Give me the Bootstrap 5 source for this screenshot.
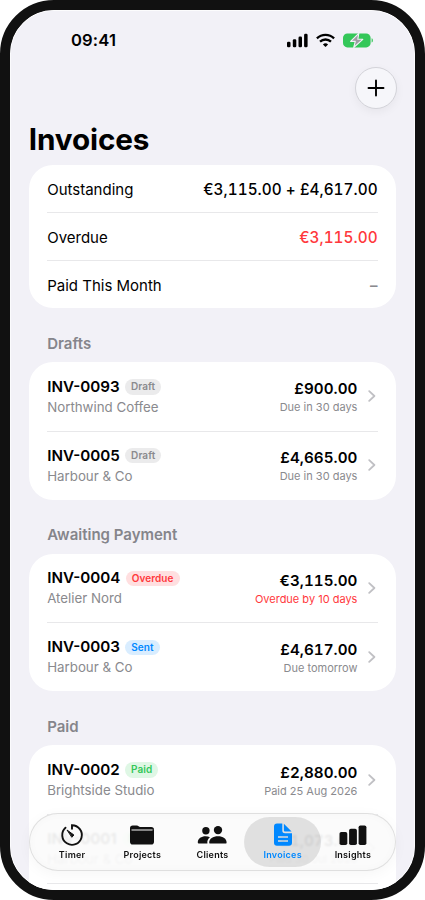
<!DOCTYPE html>
<html lang="en">
<head>
<meta charset="utf-8">
<meta name="viewport" content="width=device-width, initial-scale=1">
<title>Invoices</title>
<link rel="stylesheet" href="https://cdn.jsdelivr.net/npm/bootstrap@5.3.0/dist/css/bootstrap.min.css">
<style>
html,body{height:100%;overflow:hidden}
body{font-family:Inter,"Liberation Sans",sans-serif;font-size:15px;color:#000;background:#fff}
svg{display:block}
.phone{width:425px;height:900px;border:10px solid #111;border-radius:54px;background:#f2f1f7}
.phone-screen{height:880px;padding:.3px 19px 0;border-radius:44px;box-shadow:inset 0 0 0 .7px #fff}
.status-bar{height:56.7px;padding:3.3px 23px 0 42px}
.clock{font-size:16.6px;font-weight:600;letter-spacing:.15px}
.add-btn{width:42px;height:42px;border:1px solid #d3d3d9;background:#f6f6fa;box-shadow:0 3px 10px rgba(0,0,0,.05);margin-right:-.5px}
.page-title{font-size:29.7px;font-weight:700;line-height:36px;letter-spacing:-.15px;margin:12.3px 0 7.5px -.2px}
.panel{background:#fff;border-radius:24px;padding:0 18.4px 0 18.2px}
.panel>div+div{border-top:1px solid #e8e8ea}
.sum-row{height:47.7px;padding-top:3px}
.num{font-weight:500;font-size:15.3px;font-feature-settings:"tnum";letter-spacing:.05px}
.none{font-weight:600;color:#8a8a8e}
.red{color:#ff383c}
.section-head{font-size:15px;font-weight:600;line-height:20px;color:#85858b;padding-left:18.2px;margin:25.9px 0 8.2px}
.inv-row{height:68.8px;padding-top:1px}
.inv-row+.inv-row{padding-top:0}
.inv-id{font-weight:600;font-size:15.2px;line-height:20px}
.client{font-size:13.3px;line-height:20px;color:#8a8a8e}
.amount{font-weight:600;font-size:15.2px;line-height:20px;padding-top:1px}
.due{font-size:11px;line-height:16px;color:#8a8a8e}
.due.red{color:#ff383c}
.chip{font-size:10px;font-weight:600;line-height:15.4px;letter-spacing:.08px;border-radius:8px;padding:0 6px;margin-left:5.3px}
.chip-draft{background:#ebebec;color:#8a8a8e}
.chip-overdue{background:#ffdfe0;color:#ff383c}
.chip-sent{background:#d9edff;color:#0088ff}
.chip-paid{background:#dff7e5;color:#34c759}
.chev{margin:0 1.4px 1px 10.8px}
.tab-bar{left:29px;top:813.3px;width:367px;height:57.4px;border-radius:29px;border:1px solid rgba(0,0,0,.11);background:rgba(251,251,251,.93);box-shadow:0 3px 14px rgba(0,0,0,.04), inset 0 0 10px rgba(0,0,0,.025);backdrop-filter:blur(1px);padding:3px 6.5px}
.tab-item{width:70.2px;color:#111;font-size:9px;font-weight:600;letter-spacing:.25px;line-height:12px;padding:4px 0 0}
.tab-item svg{margin-bottom:2px}
.tab-item.current{width:77.3px;margin:0 -3.55px;background:rgba(0,0,0,.105);border-radius:25px;color:#0088ff}
</style>
<script src="https://cdn.jsdelivr.net/npm/bootstrap@5.3.0/dist/js/bootstrap.bundle.min.js"></script>
</head>
<body>
<div class="phone position-relative overflow-hidden">
<div class="phone-screen">
  <div class="status-bar d-flex align-items-center justify-content-between">
    <span class="clock">09:41</span>
    <div class="d-flex align-items-center">
      <svg width="21" height="15" viewBox="0 0 21 15"><rect x="0" y="8.7" width="3.5" height="5.6" rx="1.3"/><rect x="5.8" y="6.2" width="3.5" height="8.1" rx="1.3"/><rect x="11.5" y="3.6" width="3.5" height="10.7" rx="1.3"/><rect x="17.1" y=".7" width="3.5" height="13.6" rx="1.3"/></svg>
      <svg class="ms-2" width="19" height="15" viewBox="0 0 19 15" fill="none" stroke="#000" stroke-width="2.3"><path d="M.9 5.4a12.4 12.4 0 0 1 17.2 0M4 8.7a8 8 0 0 1 11 0"/><path d="M9.5 14.1 6.9 11.4a3.9 3.9 0 0 1 5.2 0z" fill="#000" stroke="none"/></svg>
      <svg class="ms-2" width="30" height="15" viewBox="0 0 30 15"><rect x="0" y=".4" width="27.6" height="14" rx="4.4" fill="#34c759"/><path d="M28.6 5.3c1.7.5 1.7 3.7 0 4.2z" fill="#34c759"/><path d="M15.8.3 7.6 8.4h4.7L10.7 14.5 19.800 6.300h-5z" fill="#9d9da2" stroke="#f2f1f7" stroke-width="1.1" stroke-linejoin="round"/></svg>
    </div>
  </div>
  <div class="d-flex justify-content-end">
    <button class="add-btn btn rounded-circle p-0 d-flex align-items-center justify-content-center" aria-label="Add"><svg width="18" height="18" viewBox="0 0 18 18" stroke="#000" stroke-width="1.9" stroke-linecap="round"><path d="M9 1.500v15M1.500 9h15"/></svg></button>
  </div>
  <h1 class="page-title">Invoices</h1>

  <div class="panel">
    <div class="sum-row d-flex align-items-center justify-content-between"><span>Outstanding</span><span class="num">€3,115.00 + £4,617.00</span></div>
    <div class="sum-row d-flex align-items-center justify-content-between"><span>Overdue</span><span class="num red">€3,115.00</span></div>
    <div class="sum-row d-flex align-items-center justify-content-between"><span>Paid This Month</span><span class="none">–</span></div>
  </div>

  <h2 class="section-head">Drafts</h2>
  <div class="panel">
    <div class="inv-row d-flex align-items-center">
      <div class="me-auto"><div class="d-flex align-items-center"><span class="inv-id">INV-0093</span><span class="chip chip-draft">Draft</span></div><div class="client">Northwind Coffee</div></div>
      <div class="text-end"><div class="num amount">£900.00</div><div class="due">Due in 30 days</div></div>
      <svg class="chev" width="8" height="12" viewBox="0 0 8 12" fill="none" stroke="#c0c0c4" stroke-width="1.8" stroke-linecap="round" stroke-linejoin="round"><path d="M1.2 1.1 6.4 6 1.2 10.9"/></svg>
    </div>
    <div class="inv-row d-flex align-items-center">
      <div class="me-auto"><div class="d-flex align-items-center"><span class="inv-id">INV-0005</span><span class="chip chip-draft">Draft</span></div><div class="client">Harbour &amp; Co</div></div>
      <div class="text-end"><div class="num amount">£4,665.00</div><div class="due">Due in 30 days</div></div>
      <svg class="chev" width="8" height="12" viewBox="0 0 8 12" fill="none" stroke="#c0c0c4" stroke-width="1.8" stroke-linecap="round" stroke-linejoin="round"><path d="M1.2 1.1 6.4 6 1.2 10.9"/></svg>
    </div>
  </div>

  <h2 class="section-head">Awaiting Payment</h2>
  <div class="panel">
    <div class="inv-row d-flex align-items-center">
      <div class="me-auto"><div class="d-flex align-items-center"><span class="inv-id">INV-0004</span><span class="chip chip-overdue">Overdue</span></div><div class="client">Atelier Nord</div></div>
      <div class="text-end"><div class="num amount">€3,115.00</div><div class="due red">Overdue by 10 days</div></div>
      <svg class="chev" width="8" height="12" viewBox="0 0 8 12" fill="none" stroke="#c0c0c4" stroke-width="1.8" stroke-linecap="round" stroke-linejoin="round"><path d="M1.2 1.1 6.4 6 1.2 10.9"/></svg>
    </div>
    <div class="inv-row d-flex align-items-center">
      <div class="me-auto"><div class="d-flex align-items-center"><span class="inv-id">INV-0003</span><span class="chip chip-sent">Sent</span></div><div class="client">Harbour &amp; Co</div></div>
      <div class="text-end"><div class="num amount">£4,617.00</div><div class="due">Due tomorrow</div></div>
      <svg class="chev" width="8" height="12" viewBox="0 0 8 12" fill="none" stroke="#c0c0c4" stroke-width="1.8" stroke-linecap="round" stroke-linejoin="round"><path d="M1.2 1.1 6.4 6 1.2 10.9"/></svg>
    </div>
  </div>

  <h2 class="section-head">Paid</h2>
  <div class="panel">
    <div class="inv-row d-flex align-items-center">
      <div class="me-auto"><div class="d-flex align-items-center"><span class="inv-id">INV-0002</span><span class="chip chip-paid">Paid</span></div><div class="client">Brightside Studio</div></div>
      <div class="text-end"><div class="num amount">£2,880.00</div><div class="due">Paid 25 Aug 2026</div></div>
      <svg class="chev" width="8" height="12" viewBox="0 0 8 12" fill="none" stroke="#c0c0c4" stroke-width="1.8" stroke-linecap="round" stroke-linejoin="round"><path d="M1.2 1.1 6.4 6 1.2 10.9"/></svg>
    </div>
    <div class="inv-row d-flex align-items-center">
      <div class="me-auto"><div class="d-flex align-items-center"><span class="inv-id">INV-0001</span><span class="chip chip-paid">Paid</span></div><div class="client">Harbour &amp; Co</div></div>
      <div class="text-end"><div class="num amount">£1,073.00</div><div class="due">Paid 30 Jul 2026</div></div>
      <svg class="chev" width="8" height="12" viewBox="0 0 8 12" fill="none" stroke="#c0c0c4" stroke-width="1.8" stroke-linecap="round" stroke-linejoin="round"><path d="M1.2 1.1 6.4 6 1.2 10.9"/></svg>
    </div>
    <div class="inv-row"></div>
  </div>
</div>
<nav class="tab-bar position-fixed d-flex justify-content-center">
  <div class="tab-item d-flex flex-column align-items-center"><svg width="24" height="26" viewBox="0 -.6 24 26" fill="none" stroke="#111" stroke-width="1.9" stroke-linecap="round"><path d="M12 7.200V3.600a9.800 9.800 0 1 1-6.500 2.500"/><path d="M7.300 8.600 13.900 13.400 12.100 15.400z" fill="#111" stroke-width="1" stroke-linejoin="round"/></svg>Timer</div>
  <div class="tab-item d-flex flex-column align-items-center"><svg width="24" height="26" viewBox="0 -.6 24 26" fill="#111"><path d="M0 7.800V6.600A2.700 2.700 0 0 1 2.700 3.900h4.100c1.600 0 2 1.400 3.400 1.400h11A2.800 2.500 0 0 1 24 7.800zM0 8.900h24v11.300a2.800 2.800 0 0 1-2.800 2.800H2.800A2.800 2.800 0 0 1 0 20.200z"/><path d="M0 6.600h1.500v4H0zM22.500 7.600H24v3h-1.500z"/></svg>Projects</div>
  <div class="tab-item d-flex flex-column align-items-center"><svg width="30" height="26" viewBox="0 -.8 30 26" fill="#111"><circle cx="8.900" cy="9" r="3.700"/><circle cx="21" cy="8.300" r="4.200"/><path d="M.8 20.600C.8 16.600 4.500 14.500 8.500 14.500c1.700 0 3.200.3 4.400 1-1.900 1.500-2.900 3.500-2.500 6.300H2.100C1.300 21.800.8 21.300.8 20.600zM12.200 20.600c0-3.800 3.800-6.200 8.800-6.200s8.600 2.400 8.600 6.200c0 .8-.5 1.200-1.300 1.200H13.500c-.8 0-1.300-.4-1.300-1.200z"/></svg>Clients</div>
  <div class="tab-item current d-flex flex-column align-items-center"><svg width="20" height="26" viewBox="0 0 20 26" fill="#0088ff"><path fill-rule="evenodd" d="M4 2.400h5.300v7.200a2.600 2.600 0 0 0 2.600 2.600H19v9.600a3 3 0 0 1-3 3H4a3 3 0 0 1-3-3V5.400a3 3 0 0 1 3-3zM5 15.200v1.500h10v-1.500zM5 19.300v1.500h10v-1.500z"/><path d="M10.900 2.800v6.700a1 1 0 0 0 1 1H18.600z"/></svg>Invoices</div>
  <div class="tab-item d-flex flex-column align-items-center"><svg width="28" height="26" viewBox="0 -.9 28 26" fill="#111"><rect x=".5" y="10" width="7.800" height="13.200" rx="1.800"/><rect x="10.100" y="6.900" width="7.800" height="16.300" rx="1.800"/><rect x="19.600" y="3.600" width="7.800" height="19.600" rx="1.800"/></svg>Insights</div>
</nav>
</div>
</body>
</html>
